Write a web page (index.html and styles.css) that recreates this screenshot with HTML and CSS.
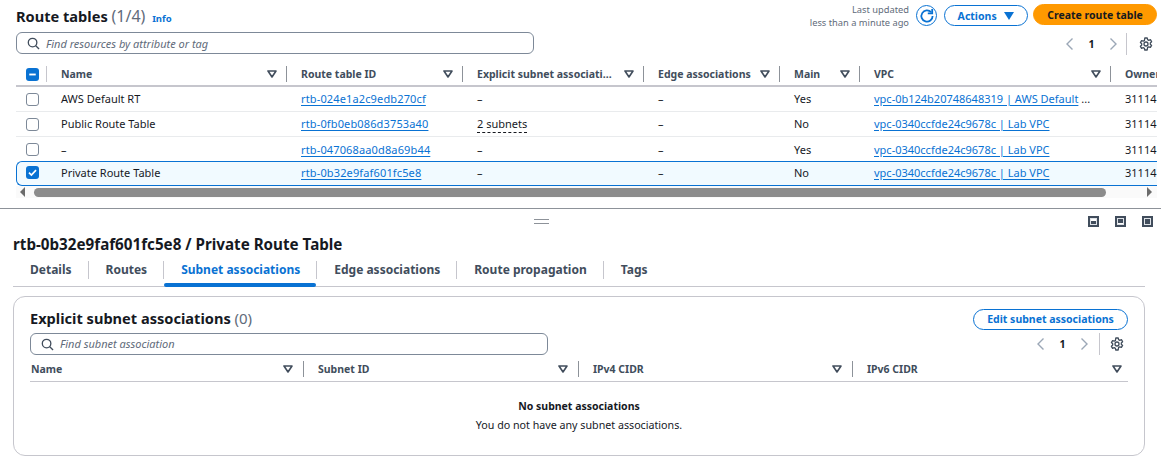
FILE: index.html
```html
<!DOCTYPE html>
<html>
<head>
  <title>Route tables</title>
  <link rel="stylesheet" href="styles.css">
</head>
<body>
  <svg class="defs" width="0" height="0">
    <symbol id="caret" viewBox="0 0 10 8"><path d="M1 1h8L5 7z" fill="none" stroke="#414d5c" stroke-width="1.6" stroke-linejoin="round"/></symbol>
    <symbol id="search" viewBox="0 0 14 14"><circle cx="6" cy="6" r="4.6" fill="none" stroke="#414d5c" stroke-width="1.4"/><path d="M9.4 9.4L13 13" stroke="#414d5c" stroke-width="1.4"/></symbol>
    <symbol id="prev" viewBox="0 0 10 14"><path d="M7.5 1.5L2 7l5.5 5.5" fill="none" stroke="#9ba7b6" stroke-width="1.4"/></symbol>
    <symbol id="next" viewBox="0 0 10 14"><path d="M2.5 1.5L8 7l-5.5 5.5" fill="none" stroke="#9ba7b6" stroke-width="1.4"/></symbol>
    <symbol id="gear" viewBox="0 0 14 14"><path d="M5.8 1h2.4l.4 1.7 1.2.6 1.6-.6 1.2 2-1.3 1.2v1.3l1.3 1.2-1.2 2-1.6-.6-1.2.6L8.2 13H5.8l-.4-1.7-1.2-.6-1.6.6-1.2-2 1.3-1.2V6.8L1.4 5.6l1.2-2 1.6.6 1.2-.6z" fill="none" stroke="#414d5c" stroke-width="1.3" stroke-linejoin="round"/><circle cx="7" cy="7" r="2" fill="none" stroke="#414d5c" stroke-width="1.3"/></symbol>
  </svg>

  <section class="top">
    <div class="page-head">
      <h1 class="page-title">Route tables <span class="count">(1/4)</span> <a class="info">Info</a></h1>
      <div class="head-actions">
        <div class="updated">Last updated<br>less than a minute ago</div>
        <button class="refresh">
          <svg width="18" height="18" viewBox="0 0 18 18"><path d="M13.1 5.2A5.6 5.6 0 1 0 14.6 9" fill="none" stroke="#0972d3" stroke-width="1.8"/><path d="M9.8 6.4h4.4V2" fill="none" stroke="#0972d3" stroke-width="1.8"/></svg>
        </button>
        <button class="btn btn-actions">Actions <svg width="10" height="8" viewBox="0 0 10 8"><path d="M0 0h10L5 8z" fill="#0972d3"/></svg></button>
        <button class="btn btn-primary">Create route table</button>
      </div>
    </div>

    <div class="tools top-tools">
      <div class="search"><svg width="13" height="13"><use href="#search"/></svg><span>Find resources by attribute or tag</span></div>
      <div class="pager">
        <svg width="10" height="14"><use href="#prev"/></svg><b>1</b><svg width="10" height="14"><use href="#next"/></svg>
        <i class="pager-sep"></i>
        <svg width="14" height="14"><use href="#gear"/></svg>
      </div>
    </div>

    <div class="table-wrap">
      <div class="row head-row">
        <div class="cell check-cell"><span class="check on"><svg width="14" height="14" viewBox="0 0 14 14"><path d="M3.5 7h7" stroke="#fff" stroke-width="2"/></svg></span></div>
        <div class="cell th">Name<svg width="10" height="8"><use href="#caret"/></svg></div>
        <div class="cell th">Route table ID<svg width="10" height="8"><use href="#caret"/></svg></div>
        <div class="cell th">Explicit subnet associati...<svg width="10" height="8"><use href="#caret"/></svg></div>
        <div class="cell th">Edge associations<svg width="10" height="8"><use href="#caret"/></svg></div>
        <div class="cell th">Main<svg width="10" height="8"><use href="#caret"/></svg></div>
        <div class="cell th">VPC<svg width="10" height="8"><use href="#caret"/></svg></div>
        <div class="cell th last">Owner</div>
      </div>
      <div class="row">
        <div class="cell check-cell"><span class="check"></span></div>
        <div class="cell">AWS Default RT</div>
        <div class="cell"><a class="rtb">rtb-024e1a2c9edb270cf</a></div>
        <div class="cell">–</div>
        <div class="cell">–</div>
        <div class="cell">Yes</div>
        <div class="cell"><a>vpc-0b124b20748648319 | AWS Default</a>&nbsp;...</div>
        <div class="cell">311141</div>
      </div>
      <div class="row">
        <div class="cell check-cell"><span class="check"></span></div>
        <div class="cell">Public Route Table</div>
        <div class="cell"><a class="rtb">rtb-0fb0eb086d3753a40</a></div>
        <div class="cell"><span class="dashed">2 subnets</span></div>
        <div class="cell">–</div>
        <div class="cell">No</div>
        <div class="cell"><a>vpc-0340ccfde24c9678c | Lab VPC</a></div>
        <div class="cell">311141</div>
      </div>
      <div class="row before-selected">
        <div class="cell check-cell"><span class="check"></span></div>
        <div class="cell">–</div>
        <div class="cell"><a class="rtb">rtb-047068aa0d8a69b44</a></div>
        <div class="cell">–</div>
        <div class="cell">–</div>
        <div class="cell">Yes</div>
        <div class="cell"><a>vpc-0340ccfde24c9678c | Lab VPC</a></div>
        <div class="cell">311141</div>
      </div>
      <div class="row selected">
        <div class="cell check-cell"><span class="check on"><svg width="14" height="14" viewBox="0 0 14 14"><path d="M3.2 7.2l2.6 2.6 5-5.4" fill="none" stroke="#fff" stroke-width="1.8"/></svg></span></div>
        <div class="cell">Private Route Table</div>
        <div class="cell"><a class="rtb">rtb-0b32e9faf601fc5e8</a></div>
        <div class="cell">–</div>
        <div class="cell">–</div>
        <div class="cell">No</div>
        <div class="cell"><a>vpc-0340ccfde24c9678c | Lab VPC</a></div>
        <div class="cell">311141</div>
      </div>
    </div>

    <div class="scrollbar">
      <svg width="6" height="10" viewBox="0 0 6 10"><path d="M5 0v10L0 5z" fill="#6b6b6b"/></svg>
      <div class="scroll-thumb"></div>
      <svg width="6" height="10" viewBox="0 0 6 10"><path d="M1 0v10l5-5z" fill="#6b6b6b"/></svg>
    </div>
  </section>

  <section class="split">
    <div class="split-bar">
      <div class="handle"></div>
      <div class="split-icons">
        <span class="pane pane-low"></span>
        <span class="pane pane-mid"></span>
        <span class="pane pane-full"></span>
      </div>
    </div>

    <h2 class="detail-title">rtb-0b32e9faf601fc5e8 / Private Route Table</h2>

    <div class="tabs">
      <div class="tab">Details</div>
      <div class="tab">Routes</div>
      <div class="tab active">Subnet associations</div>
      <div class="tab">Edge associations</div>
      <div class="tab">Route propagation</div>
      <div class="tab last">Tags</div>
    </div>

    <div class="card">
      <div class="card-head">
        <h3 class="card-title">Explicit subnet associations <span class="count">(0)</span></h3>
        <button class="btn btn-edit">Edit subnet associations</button>
      </div>
      <div class="tools card-tools">
        <div class="search"><svg width="13" height="13"><use href="#search"/></svg><span>Find subnet association</span></div>
        <div class="pager">
          <svg width="10" height="14"><use href="#prev"/></svg><b>1</b><svg width="10" height="14"><use href="#next"/></svg>
          <i class="pager-sep"></i>
          <svg width="14" height="14"><use href="#gear"/></svg>
        </div>
      </div>
      <div class="sub-head">
        <div class="cell th">Name<svg width="10" height="8"><use href="#caret"/></svg></div>
        <div class="cell th">Subnet ID<svg width="10" height="8"><use href="#caret"/></svg></div>
        <div class="cell th">IPv4 CIDR<svg width="10" height="8"><use href="#caret"/></svg></div>
        <div class="cell th last">IPv6 CIDR<svg width="10" height="8"><use href="#caret"/></svg></div>
      </div>
      <div class="empty">
        <strong>No subnet associations</strong>
        <p>You do not have any subnet associations.</p>
      </div>
    </div>
  </section>
</body>
</html>
```

FILE: styles.css
```css
* {
  box-sizing: border-box;
}

body {
  margin: 0;
  font-family: "Noto Sans", Arial, sans-serif;
  font-size: 11px;
  color: #16191f;
  background: #fff;
  overflow: hidden;
}

.defs {
  display: block;
  height: 0;
}

button {
  font-family: inherit;
  cursor: pointer;
}

a {
  color: #0972d3;
  text-decoration: underline;
  text-underline-offset: 2px;
}

.rtb {
  letter-spacing: 0.14px;
}

.top {
  height: 209px;
  padding: 4px 4px 0 16px;
  border-bottom: 1px solid #8d9299;
}

.page-head {
  display: flex;
  justify-content: space-between;
  height: 26px;
}

.page-title {
  margin: 0;
  font-size: 14.6px;
  line-height: 24px;
  font-weight: 700;
}

.page-title .count {
  font-size: 16px;
}

.card-title .count {
  font-size: 15px;
}

.count {
  font-weight: 400;
  color: #5f6b7a;
}

.info {
  margin-left: 3px;
  font-size: 9.5px;
  font-weight: 700;
  text-decoration: none;
}

.head-actions {
  display: flex;
  align-items: flex-start;
}

.updated {
  margin: -1px 7px 0 0;
  font-size: 9.3px;
  line-height: 13px;
  text-align: right;
  color: #5f6b7a;
}

.refresh {
  width: 21px;
  height: 21px;
  padding: 0;
  margin: 1px 7px 0 0;
  display: flex;
  align-items: center;
  justify-content: center;
  background: #fff;
  border: 1.5px solid #0972d3;
  border-radius: 50%;
}

.btn {
  height: 21px;
  padding: 0;
  font-size: 10.5px;
  font-weight: 700;
  border-radius: 11px;
  background: #fff;
  color: #0972d3;
  border: 1.5px solid #0972d3;
}

.btn-actions {
  width: 84px;
  margin: 1px 5px 0 0;
}

.btn-actions svg {
  margin-left: 5px;
}

.btn-primary {
  width: 124px;
  background: #ff9900;
  border-color: #ff9900;
  color: #16191f;
}

.tools {
  display: flex;
  justify-content: space-between;
  align-items: center;
}

.top-tools {
  height: 26px;
}

.top-tools .pager {
  margin-top: 2px;
}

.search {
  width: 518px;
  height: 22px;
  padding-left: 10px;
  display: flex;
  align-items: center;
  gap: 6px;
  border: 1px solid #7d8998;
  border-radius: 6px;
  font-size: 11px;
  font-style: italic;
  color: #5f6b7a;
}

.card-tools .search span {
  margin-top: -2px;
}

.pager {
  display: flex;
  align-items: center;
  margin-right: 4px;
}

.pager b {
  width: 33px;
  text-align: center;
  font-size: 10.5px;
}

.pager-sep {
  width: 1px;
  height: 22px;
  margin: 0 12px 0 8px;
  background: #c6c6cd;
}

.table-wrap {
  width: 1141px;
  margin-top: 5px;
  overflow: hidden;
}

.row {
  display: grid;
  grid-template-columns: 31px 240px 176px 181px 136px 80px 251px 60px;
  height: 25px;
  align-items: center;
  border-bottom: 1px solid #e9ebed;
  white-space: nowrap;
}

.cell {
  padding-left: 14px;
  line-height: 20px;
  overflow: hidden;
}

.check-cell {
  padding-left: 10px;
  display: flex;
}

.check {
  width: 13px;
  height: 13px;
  border: 1.5px solid #7d8998;
  border-radius: 3px;
  display: block;
  background: #fff;
}

.check.on {
  background: #0972d3;
  border: 0;
}

.check svg {
  display: block;
  width: 13px;
  height: 13px;
}

.head-row {
  height: 26px;
  padding-top: 2px;
  border-bottom: 2px solid #c6c6cd;
}

.th {
  display: flex;
  justify-content: space-between;
  align-items: center;
  height: 16px;
  padding-right: 9px;
  border-right: 1px solid #8d9299;
  font-size: 10.5px;
  font-weight: 700;
  color: #414d5c;
}

.th.last {
  border-right: 0;
}

.head-row .check-cell {
  height: 16px;
  border-right: 1px solid #c6c6cd;
  align-items: center;
}

.before-selected {
  border-bottom: 0;
  height: 24px;
  padding-top: 1px;
}

.selected {
  grid-template-columns: 30px 240px 176px 181px 136px 80px 251px 60px;
  height: 25px;
  padding-bottom: 2px;
  background: #f1faff;
  border: 1px solid #0972d3;
  border-right: 0;
  border-radius: 6px 0 0 6px;
}

.selected .check-cell {
  padding-left: 9px;
}

.dashed {
  border-bottom: 1px dashed #16191f;
  padding-bottom: 1px;
}

.scrollbar {
  width: 1141px;
  height: 12px;
  display: flex;
  align-items: center;
  padding: 0 4px 0 4px;
  gap: 8px;
  background: #fafafa;
}

.scroll-thumb {
  width: 1072px;
  height: 9px;
  margin-right: 32px;
  background: #8c8c8c;
  border-radius: 5px;
}

.split {
  padding: 0 16px 0 13px;
}

.split-bar {
  height: 25px;
  display: flex;
  align-items: center;
  padding-left: 521px;
}

.handle {
  width: 15px;
  height: 5px;
  border-top: 1px solid #8d9299;
  border-bottom: 1px solid #8d9299;
}

.split-icons {
  display: flex;
  gap: 16px;
  margin-left: auto;
  margin-right: -8px;
}

.pane {
  width: 11px;
  height: 11px;
  background: #414d5c;
  border: 2px solid #414d5c;
  display: block;
  box-shadow: inset 0 0 0 1px #dfe3e8;
}

.pane-low {
  background: linear-gradient(#fff 50%, #414d5c 50%);
}

.pane-mid {
  background: linear-gradient(#414d5c 65%, #fff 65%);
}

.detail-title {
  margin: 0;
  font-size: 15.2px;
  line-height: 20px;
  font-weight: 700;
}

.tabs {
  display: flex;
  align-items: center;
  height: 32px;
  margin-top: 1px;
  padding-bottom: 2px;
  border-bottom: 1px solid #c6c6cd;
  width: 1132px;
  position: relative;
}

.tab {
  height: 18px;
  line-height: 18px;
  padding: 0 16px 0 17px;
  border-right: 1px solid #c6c6cd;
  font-size: 12px;
  font-weight: 700;
  color: #414d5c;
  position: relative;
}

.tab.last {
  border-right: 0;
}

.tab.active {
  color: #0972d3;
}

.tab.active::after {
  content: "";
  position: absolute;
  left: 0;
  right: 0;
  bottom: -8px;
  height: 4px;
  border-radius: 2px;
  background: #0972d3;
}

.card {
  width: 1132px;
  height: 160px;
  margin-top: 9px;
  padding: 11px 16px 0 16px;
  border: 1px solid #c6c6cd;
  border-radius: 12px;
}

.card-head {
  display: flex;
  justify-content: space-between;
  align-items: center;
  height: 22px;
}

.card-title {
  margin: 0 0 2px;
  font-size: 14.6px;
  font-weight: 700;
}

.btn-edit {
  width: 155px;
}

.card-tools {
  height: 24px;
  margin-top: 2px;
}

.card-tools .pager-sep {
  margin: 0 10px;
}

.sub-head {
  display: grid;
  grid-template-columns: 274px 275px 274px 275px;
  align-items: center;
  height: 26px;
  border-bottom: 1px solid #c6c6cd;
}

.sub-head .cell {
  padding-left: 14px;
  padding-right: 10px;
}

.sub-head .cell:first-child {
  padding-left: 1px;
}

.sub-head .cell.last {
  padding-right: 6px;
}

.empty {
  text-align: center;
  padding-top: 15px;
  line-height: 19px;
  font-size: 10.7px;
}

.empty strong {
  display: block;
  font-size: 10.5px;
}

.empty p {
  margin: 0;
}
```
